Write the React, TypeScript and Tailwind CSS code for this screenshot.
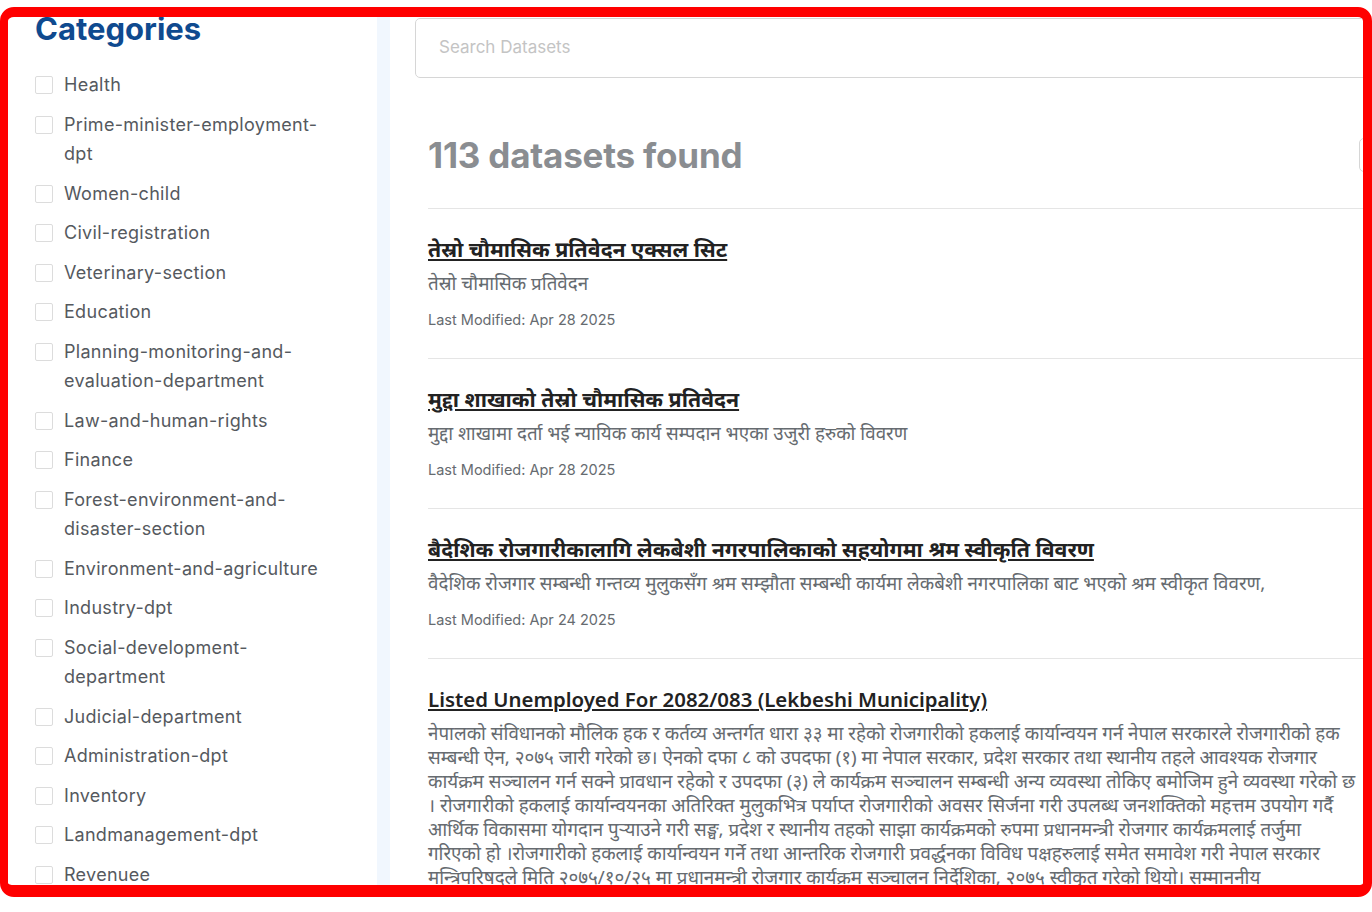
import React from 'react';

const categories = [
  'Health',
  'Prime-minister-employment-dpt',
  'Women-child',
  'Civil-registration',
  'Veterinary-section',
  'Education',
  'Planning-monitoring-and-evaluation-department',
  'Law-and-human-rights',
  'Finance',
  'Forest-environment-and-disaster-section',
  'Environment-and-agriculture',
  'Industry-dpt',
  'Social-development-department',
  'Judicial-department',
  'Administration-dpt',
  'Inventory',
  'Landmanagement-dpt',
  'Revenuee',
];

interface Dataset {
  title: string;
  description: string;
  modified?: string;
  latin?: boolean;
}

const datasets: Dataset[] = [
  {
    title: 'तेस्रो चौमासिक प्रतिवेदन एक्सल सिट',
    description: 'तेस्रो चौमासिक प्रतिवेदन',
    modified: 'Apr 28 2025',
  },
  {
    title: 'मुद्दा शाखाको तेस्रो चौमासिक प्रतिवेदन',
    description: 'मुद्दा शाखामा दर्ता भई न्यायिक कार्य सम्पदान भएका उजुरी हरुको विवरण',
    modified: 'Apr 28 2025',
  },
  {
    title: 'बैदेशिक रोजगारीकालागि लेकबेशी नगरपालिकाको सहयोगमा श्रम स्वीकृति विवरण',
    description:
      'वैदेशिक रोजगार सम्बन्धी गन्तव्य मुलुकसँग श्रम सम्झौता सम्बन्धी कार्यमा लेकबेशी नगरपालिका बाट भएको श्रम स्वीकृत विवरण,',
    modified: 'Apr 24 2025',
  },
  {
    title: 'Listed Unemployed For 2082/083 (Lekbeshi Municipality)',
    latin: true,
    description:
      'नेपालको संविधानको मौलिक हक र कर्तव्य अन्तर्गत धारा ३३ मा रहेको रोजगारीको हकलाई कार्यान्वयन गर्न नेपाल सरकारले रोजगारीको हक सम्बन्धी ऐन, २०७५ जारी गरेको छ। ऐनको दफा ८ को उपदफा (१) मा नेपाल सरकार, प्रदेश सरकार तथा स्थानीय तहले आवश्यक रोजगार कार्यक्रम सञ्चालन गर्न सक्ने प्रावधान रहेको र उपदफा (३) ले कार्यक्रम सञ्चालन सम्बन्धी अन्य व्यवस्था तोकिए बमोजिम हुने व्यवस्था गरेको छ । रोजगारीको हकलाई कार्यान्वयनका अतिरिक्त मुलुकभित्र पर्याप्त रोजगारीको अवसर सिर्जना गरी उपलब्ध जनशक्तिको महत्तम उपयोग गर्दै आर्थिक विकासमा योगदान पुऱ्याउने गरी सङ्घ, प्रदेश र स्थानीय तहको साझा कार्यक्रमको रुपमा प्रधानमन्त्री रोजगार कार्यक्रमलाई तर्जुमा गरिएको हो ।रोजगारीको हकलाई कार्यान्वयन गर्ने तथा आन्तरिक रोजगारी प्रवर्द्धनका विविध पक्षहरुलाई समेत समावेश गरी नेपाल सरकार मन्त्रिपरिषद्ले मिति २०७५/१०/२५ मा प्रधानमन्त्री रोजगार कार्यक्रम सञ्चालन निर्देशिका, २०७५ स्वीकृत गरेको थियो। सम्माननीय प्रधानमन्त्रीज्यूबाट मिति २०७५ फागुन ३० गते कार्यक्रमको औपचारिक शुभारम्भ गरिएको थियो।',
  },
];

const sans = "font-['Inter','Noto_Sans',sans-serif]";

const CategoryItem: React.FC<{ name: string }> = ({ name }) => (
  <label className="flex items-start gap-[11px] cursor-pointer">
    <span className="mt-[6px] w-[18px] h-[18px] shrink-0 rounded-[2px] border border-[#dcdcdc] bg-white" />
    <span className="w-[268px] text-[18px] leading-[29.5px] tracking-[0.3px] text-[#55595e]">{name}</span>
  </label>
);

const DatasetItem: React.FC<{ item: Dataset }> = ({ item }) => (
  <div className="border-b border-[#e5e5e5] pt-[25px] pb-[28px]">
    <a
      href="#"
      className={
        item.latin
          ? "block text-[20.4px] leading-[30px] font-semibold text-[#222] underline underline-offset-2 decoration-[1.5px] font-['Noto_Sans',sans-serif]"
          : "block text-[21.3px] leading-[30px] font-bold text-[#222] underline underline-offset-2 decoration-[1.5px] font-['Noto_Sans',sans-serif]"
      }
    >
      {item.title}
    </a>
    <p className="mt-[7px] max-w-[928px] text-[18.8px] leading-[24px] text-[#666b70] font-['Noto_Sans',sans-serif]">
      {item.description}
    </p>
    {item.modified && (
      <p className={`mt-[15px] text-[14.5px] leading-[20px] text-[#666b70] ${sans}`}>
        Last Modified: {item.modified}
      </p>
    )}
  </div>
);

export default function App() {
  return (
    <div className={`w-[1372px] h-[912px] bg-white pt-[7px] ${sans}`}>
      <div className="h-[890px] overflow-hidden rounded-[14px] border-solid border-[#ff0000] border-t-[10px] border-l-[8px] border-r-[9px] border-b-[12px] bg-white flex">
        {/* sidebar */}
        <aside className="w-[369px] shrink-0 pl-[27px]">
          <h2 className="text-[31px] leading-[36px] font-bold text-[#0f4a8f] -mt-[6px]">Categories</h2>
          <div className="mt-[23px] flex flex-col gap-[10px]">
            {categories.map((c) => (
              <CategoryItem key={c} name={c} />
            ))}
          </div>
        </aside>
        <div className="w-[13px] shrink-0 bg-[#f1f7fe]" />

        {/* main */}
        <main className="w-[1100px] shrink-0 pl-[25px] pt-[1px]">
          <div className="h-[60px] rounded-[5px] border border-[#d6d6d6] flex items-center px-[23px]">
            <span className="text-[17px] text-[#c4c4c4]">Search Datasets</span>
          </div>
          <div className="pl-[13px]">
            <div className="flex items-center pt-[57px] pb-[33px] border-b border-[#e5e5e5]">
              <h1 className="w-[931px] shrink-0 text-[35px] leading-[40px] font-bold text-[#8a8d91] tracking-[-0.2px]">
                113 datasets found
              </h1>
              <div className="w-[160px] h-[34px] shrink-0 rounded-[5px] border border-[#d6d6d6]" />
            </div>
            {datasets.map((d) => (
              <DatasetItem key={d.title} item={d} />
            ))}
          </div>
        </main>
      </div>
    </div>
  );
}
